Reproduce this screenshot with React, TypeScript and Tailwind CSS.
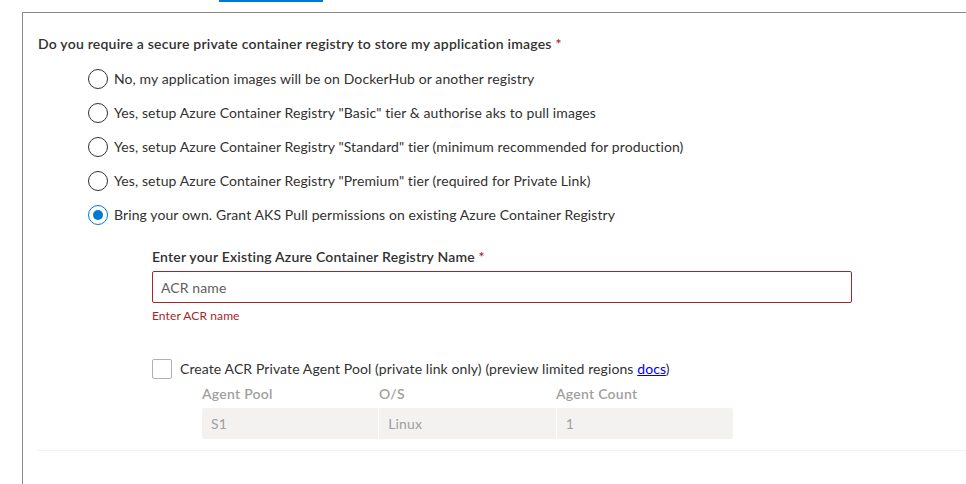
import React from 'react';

const options = [
  'No, my application images will be on DockerHub or another registry',
  'Yes, setup Azure Container Registry "Basic" tier & authorise aks to pull images',
  'Yes, setup Azure Container Registry "Standard" tier (minimum recommended for production)',
  'Yes, setup Azure Container Registry "Premium" tier (required for Private Link)',
  'Bring your own. Grant AKS Pull permissions on existing Azure Container Registry',
];

const Radio = ({ checked }: { checked: boolean }) =>
  checked ? (
    <span className="w-5 h-5 rounded-full border border-[#0078d4] flex items-center justify-center shrink-0">
      <span className="w-[10px] h-[10px] rounded-full bg-[#0078d4]" />
    </span>
  ) : (
    <span className="w-5 h-5 rounded-full border border-[#323130] shrink-0" />
  );

export default function App() {
  const selected = 4;

  return (
    <div className="w-[966px] h-[484px] overflow-hidden bg-white font-['Lato',sans-serif] text-[14px] tracking-[0.1px] text-[#323130]">
      {/* active tab underline */}
      <div className="h-[2px] ml-[219px] w-[104px] bg-[#0078d4]" />

      <div className="mt-[10px] ml-[22px] h-[480px] border-l border-t border-[#8a8886] pl-[15px] pt-[21px]">
        <div className="font-semibold leading-5 tracking-[0.22px]">
          Do you require a secure private container registry to store my application images{' '}
          <span className="text-[#a4262c]">*</span>
        </div>

        <div className="mt-[8px] pl-[50px]">
          {options.map((o, i) => (
            <div key={i} className="h-[34px] flex items-center gap-[6px]">
              <Radio checked={i === selected} />
              <span className="leading-5">{o}</span>
            </div>
          ))}
        </div>

        <div className="ml-[114px]">
          <div className="mt-[15px] font-semibold leading-5 tracking-[0.2px]">
            Enter your Existing Azure Container Registry Name <span className="text-[#a4262c]">*</span>
          </div>
          <div className="mt-[4px] w-[700px] h-[32px] border border-[#a4262c] rounded-[2px] flex items-center px-[8px] text-[#605e5c]">
            ACR name
          </div>
          <div className="mt-[5px] text-[12px] leading-4 text-[#a4262c]">Enter ACR name</div>

          <div className="mt-[35px] h-5 flex items-center gap-[8px]">
            <span className="w-5 h-5 border border-[#b3b0ad] rounded-[2px] shrink-0" />
            <span className="leading-5">
              Create ACR Private Agent Pool (private link only) (preview limited regions{' '}
              <span className="underline text-[#0000ee]">docs</span>)
            </span>
          </div>

          <div className="ml-[50px] w-[531px]">
            <div className="mt-[5px] grid grid-cols-3 leading-5 font-semibold tracking-[0.25px] text-[#a19f9d]">
              <span>Agent Pool</span>
              <span>O/S</span>
              <span>Agent Count</span>
            </div>
            <div className="mt-[4px] grid grid-cols-3 gap-px h-[31px] text-[#a19f9d]">
              <span className="bg-[#f3f2f1] rounded-l-[2px] pl-[9px] flex items-center">S1</span>
              <span className="bg-[#f3f2f1] pl-[9px] flex items-center">Linux</span>
              <span className="bg-[#f3f2f1] rounded-r-[2px] pl-[9px] flex items-center">1</span>
            </div>
          </div>
        </div>

        <div className="mt-[11px] h-px bg-[#f3f2f1]" />
      </div>
    </div>
  );
}
